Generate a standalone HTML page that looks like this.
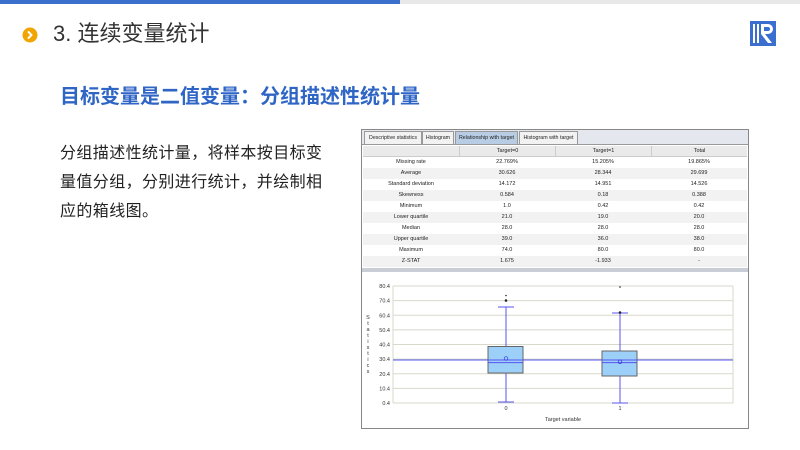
<!DOCTYPE html>
<html><head><meta charset="utf-8"><style>
*{margin:0;padding:0;box-sizing:border-box}
body{width:800px;height:450px;background:#fff;position:relative;overflow:hidden;font-family:"Liberation Sans","Noto Sans CJK SC",sans-serif}
.abs{position:absolute}
.tab{position:absolute;top:131px;height:13px;border:1px solid #999;border-bottom:none;background:#f2f2f2;font-size:5.3px;line-height:12px;text-align:center;color:#222;white-space:nowrap;overflow:hidden}
.row{position:absolute;left:363px;width:384px;height:11px;font-size:5.5px;line-height:11px;color:#222}
.row span{position:absolute;width:96px;text-align:center}
</style></head><body>
<div class="abs" style="left:0;top:0;width:400px;height:4px;background:#3b6fcc"></div>
<div class="abs" style="left:400px;top:0;width:400px;height:4px;background:#e8e8e8"></div>
<svg class="abs" style="left:22px;top:27px" width="16" height="16" viewBox="0 0 16 16"><circle cx="8" cy="8" r="7.5" fill="#f0a500"/><path d="M6.5 5l3 3-3 3" stroke="#fff" stroke-width="2" fill="none" stroke-linecap="round" stroke-linejoin="round"/></svg>
<div class="abs" style="left:53px;top:19px;font-size:22px;color:#333;line-height:30px">3. 连续变量统计</div>
<svg class="abs" style="left:750px;top:21px" width="26" height="25" viewBox="0 0 26 25">
<rect width="26" height="25" fill="#3a6fd0"/>
<rect x="3" y="3" width="2" height="19" fill="#fff"/><rect x="7" y="3" width="2" height="19" fill="#fff"/>
<path d="M11 3h7a5 5 0 0 1 0 10h-3l7 9h-4l-7-9z M14 6v4h4a2 2 0 0 0 0-4z" fill="#fff" fill-rule="evenodd"/>
</svg>
<div class="abs" style="left:60px;top:84px;font-size:20px;font-weight:bold;color:#2f66c5;line-height:26px">目标变量是二值变量：分组描述性统计量</div>
<div class="abs" style="left:60px;top:139px;width:272px;font-size:16px;letter-spacing:0.4px;color:#222;line-height:29px">分组描述性统计量，将样本按目标变量值分组，分别进行统计，并绘制相应的箱线图。</div>

<div class="abs" style="left:361px;top:129px;width:388px;height:300px;border:1px solid #888;background:#fff"></div>
<div class="abs" style="left:362px;top:130px;width:386px;height:15px;background:#e4e8ee;border-bottom:1px solid #999"></div>
<div class="tab" style="left:364px;width:58px">Descriptive statistics</div>
<div class="tab" style="left:422px;width:32px">Histogram</div>
<div class="tab" style="left:455px;width:63px;background:#b8cde4">Relationship with target</div>
<div class="tab" style="left:519px;width:59px">Histogram with target</div>
<div class="row" style="top:146px;background:#eaeaea;border-bottom:1px solid #ccc;height:11px"><span style="left:0"></span><span style="left:96px;border-left:1px solid #ccc">Target=0</span><span style="left:192px;border-left:1px solid #ccc">Target=1</span><span style="left:288px;border-left:1px solid #ccc">Total</span></div>
<div class="row" style="top:157px"><span style="left:0">Missing rate</span><span style="left:96px">22.769%</span><span style="left:192px">15.205%</span><span style="left:288px">19.865%</span></div>
<div class="row" style="top:168px;background:#f2f2f2"><span style="left:0">Average</span><span style="left:96px">30.626</span><span style="left:192px">28.344</span><span style="left:288px">29.699</span></div>
<div class="row" style="top:179px"><span style="left:0">Standard deviation</span><span style="left:96px">14.172</span><span style="left:192px">14.951</span><span style="left:288px">14.526</span></div>
<div class="row" style="top:190px;background:#f2f2f2"><span style="left:0">Skewness</span><span style="left:96px">0.584</span><span style="left:192px">0.18</span><span style="left:288px">0.388</span></div>
<div class="row" style="top:201px"><span style="left:0">Minimum</span><span style="left:96px">1.0</span><span style="left:192px">0.42</span><span style="left:288px">0.42</span></div>
<div class="row" style="top:212px;background:#f2f2f2"><span style="left:0">Lower quartile</span><span style="left:96px">21.0</span><span style="left:192px">19.0</span><span style="left:288px">20.0</span></div>
<div class="row" style="top:223px"><span style="left:0">Median</span><span style="left:96px">28.0</span><span style="left:192px">28.0</span><span style="left:288px">28.0</span></div>
<div class="row" style="top:234px;background:#f2f2f2"><span style="left:0">Upper quartile</span><span style="left:96px">39.0</span><span style="left:192px">36.0</span><span style="left:288px">38.0</span></div>
<div class="row" style="top:245px"><span style="left:0">Maximum</span><span style="left:96px">74.0</span><span style="left:192px">80.0</span><span style="left:288px">80.0</span></div>
<div class="row" style="top:256px;background:#f2f2f2"><span style="left:0">Z-STAT</span><span style="left:96px">1.675</span><span style="left:192px">-1.933</span><span style="left:288px">-</span></div>
<div class="abs" style="left:362px;top:268px;width:386px;height:4px;background:#c9ced6"></div>

<svg class="abs" style="left:0;top:0" width="800" height="450" font-family="Liberation Sans,sans-serif" font-size="5.5" fill="#333">
<g stroke="#d8d8cc" stroke-width="1">
<line x1="393" y1="286" x2="733" y2="286"/><line x1="393" y1="300.6" x2="733" y2="300.6"/><line x1="393" y1="315.3" x2="733" y2="315.3"/><line x1="393" y1="329.9" x2="733" y2="329.9"/><line x1="393" y1="344.5" x2="733" y2="344.5"/><line x1="393" y1="359.1" x2="733" y2="359.1"/><line x1="393" y1="373.8" x2="733" y2="373.8"/><line x1="393" y1="388.4" x2="733" y2="388.4"/><line x1="393" y1="403" x2="733" y2="403"/>
<line x1="393" y1="286" x2="393" y2="403"/><line x1="733" y1="286" x2="733" y2="403"/>
</g>
<g text-anchor="end">
<text x="390" y="288">80.4</text><text x="390" y="302.6">70.4</text><text x="390" y="317.3">60.4</text><text x="390" y="331.9">50.4</text><text x="390" y="346.5">40.4</text><text x="390" y="361.1">30.4</text><text x="390" y="375.8">20.4</text><text x="390" y="390.4">10.4</text><text x="390" y="405">0.4</text>
</g>
<g text-anchor="middle"><text x="368" y="319">S</text><text x="368" y="325">t</text><text x="368" y="331">a</text><text x="368" y="337">t</text><text x="368" y="343">i</text><text x="368" y="349">s</text><text x="368" y="355">t</text><text x="368" y="361">i</text><text x="368" y="367">c</text><text x="368" y="373">s</text>
<text x="506" y="410">0</text><text x="620" y="410">1</text><text x="563" y="421">Target variable</text></g>
<g stroke="#5555ee" stroke-width="1" fill="none">
<line x1="506" y1="307" x2="506" y2="402"/><line x1="498" y1="307" x2="514" y2="307"/><line x1="498" y1="402" x2="514" y2="402"/>
<line x1="620" y1="313" x2="620" y2="403"/><line x1="612" y1="313" x2="628" y2="313"/><line x1="612" y1="403" x2="628" y2="403"/>
</g>
<rect x="488" y="346.5" width="35" height="26.5" fill="#9dd0f8" stroke="#666"/>
<rect x="602" y="351" width="35" height="25" fill="#9dd0f8" stroke="#666"/>
<line x1="488" y1="362.6" x2="523" y2="362.6" stroke="#5555ee"/><line x1="602" y1="362.6" x2="637" y2="362.6" stroke="#5555ee"/>
<line x1="393" y1="360" x2="733" y2="360" stroke="#5555ee"/>
<circle cx="506" cy="358.5" r="1.8" fill="none" stroke="#3333dd" stroke-width="0.7"/><circle cx="620" cy="361.8" r="1.8" fill="none" stroke="#3333dd" stroke-width="0.7"/>
<circle cx="506" cy="300.5" r="1.3" fill="#222"/><circle cx="506" cy="295.5" r="0.8" fill="#222"/><circle cx="620" cy="287" r="0.8" fill="#222"/><circle cx="620" cy="312.5" r="1.3" fill="#222"/>
</svg>
</body></html>
